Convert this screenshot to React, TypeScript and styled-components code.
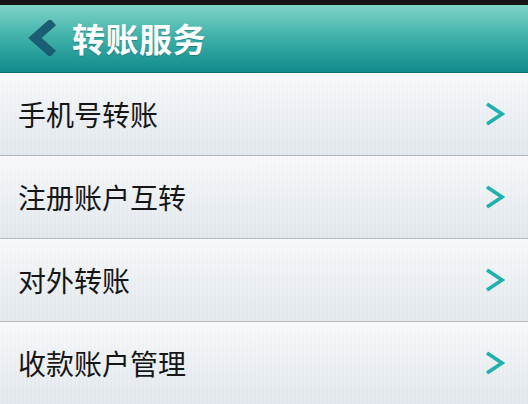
import styled, { createGlobalStyle } from 'styled-components';

const GlobalStyle = createGlobalStyle`
  html, body {
    margin: 0;
    padding: 0;
    background: #dde4ea;
  }
  body {
    font-family: "Noto Sans CJK SC", "Noto Sans", sans-serif;
  }
`;

const items = ['手机号转账', '注册账户互转', '对外转账', '收款账户管理'];

const Screen = styled.div`
  width: 528px;
  height: 404px;
  display: flex;
  flex-direction: column;
  overflow: hidden;
`;

const StatusBar = styled.div`
  height: 5px;
  background: #151515;
`;

const Header = styled.header`
  height: 69px;
  display: flex;
  align-items: center;
  gap: 14px;
  padding-left: 24px;
  background: linear-gradient(to bottom, #80d4c7 0%, #42b3ab 45%, #0f8a8c 100%);
  border-bottom: 1px solid #0b6d70;
`;

const Title = styled.h1`
  margin: 0;
  color: #fff;
  font-size: 33px;
  font-weight: 700;
  letter-spacing: 0.5px;
  text-shadow: 0 1px 1px rgba(0, 60, 60, 0.35);
`;

const List = styled.ul`
  margin: 0;
  padding: 0;
  list-style: none;
  display: flex;
  flex-direction: column;
`;

const Row = styled.li`
  height: 82px;
  display: flex;
  align-items: center;
  justify-content: space-between;
  padding: 0 23px 0 18px;
  background:
    repeating-linear-gradient(to right, rgba(255, 255, 255, 0.18) 0 2px, rgba(0, 0, 0, 0) 2px 4px),
    linear-gradient(to bottom, #f6f8fa 0%, #e9edf1 55%, #dfe5ea 100%);
  border-bottom: 1px solid #b4b8bc;

  &:last-child {
    border-bottom: none;
  }
`;

const Label = styled.span`
  font-size: 28px;
  font-weight: 400;
  color: #161616;
`;

const BackIcon = () => (
  <svg width="34" height="36" viewBox="0 0 34 36">
    <path d="M29 2 L11 18 L29 34" fill="none" stroke="#1b5d72" strokeWidth="9" strokeLinejoin="miter" />
  </svg>
);

const Chevron = () => (
  <svg width="20" height="24" viewBox="0 0 20 24">
    <path d="M2 2 L17 12 L2 22" fill="none" stroke="#20b1ad" strokeWidth="3.6" />
  </svg>
);

export default function App() {
  return (
    <>
      <GlobalStyle />
      <Screen>
        <StatusBar />
        <Header>
          <BackIcon />
          <Title>转账服务</Title>
        </Header>
        <List>
          {items.map((t) => (
            <Row key={t}>
              <Label>{t}</Label>
              <Chevron />
            </Row>
          ))}
        </List>
      </Screen>
    </>
  );
}
